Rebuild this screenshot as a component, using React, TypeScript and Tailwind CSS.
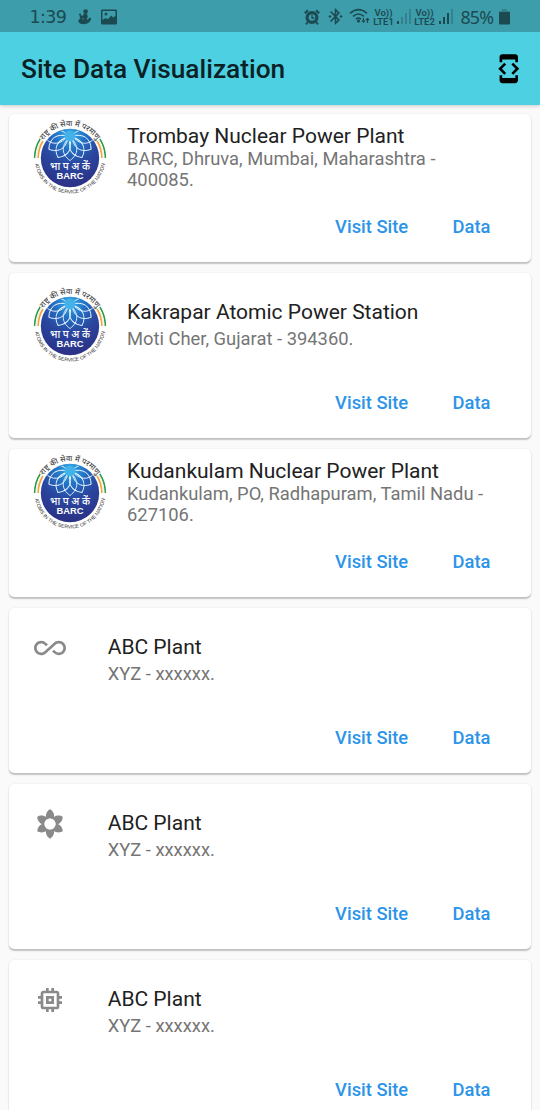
import React from "react";
import {
  MdAllInclusive,
  MdBluetoothConnected,
  MdDeveloperMode,
  MdMemory,
} from "react-icons/md";

function BarcLogo() {
  return (
    <svg viewBox="-39 -39 78 78" className="block h-[78px] w-[78px] shrink-0 overflow-visible">
      <defs>
        <radialGradient id="disc" cx="0.5" cy="0.1" r="0.85">
          <stop offset="0" stopColor="#36b0ea" />
          <stop offset="0.3" stopColor="#2371c4" />
          <stop offset="0.6" stopColor="#2a469f" />
          <stop offset="1" stopColor="#2b3488" />
        </radialGradient>
        <clipPath id="discClip">
          <circle r="28.8" />
        </clipPath>
        <path id="topArc" d="M-31.8 3A31.95 31.95 0 1 1 31.8 3" />
        <path id="bottomArc" d="M-34.2 -9A35.4 35.4 0 1 0 34.2 -9" />
      </defs>
      <circle r="29.2" fill="url(#disc)" />
      <g clipPath="url(#discClip)" fill="none" stroke="#eef8ff" strokeWidth="0.9">
        {[-84, -56, -28, 0, 28, 56, 84].map((a) => (
          <path key={a} d="M0 2C-9 10 -9 19 0 25.5C9 19 9 10 0 2" transform={`translate(0 -23) rotate(${a})`} />
        ))}
      </g>
      <circle cy="-22" r="5.4" fill="#41b3ea" />
      <g fill="none" strokeWidth="1.6">
        <path d="M-35.3 0A35.3 35.3 0 0 1 -29.8 -19" stroke="#279b48" />
        <path d="M-33.6 0A33.6 33.6 0 0 1 -28.4 -18" stroke="#f4f4ea" />
        <path d="M-31.8 0A31.8 31.8 0 0 1 -27 -17" stroke="#f2a43c" />
        <path d="M35.3 0A35.3 35.3 0 0 0 29.8 -19" stroke="#279b48" />
        <path d="M33.6 0A33.6 33.6 0 0 0 28.4 -18" stroke="#f4f4ea" />
        <path d="M31.8 0A31.8 31.8 0 0 0 27 -17" stroke="#f2a43c" />
      </g>
      <g textAnchor="middle" fontFamily="Noto Sans, sans-serif">
        <text fontSize="7.7" fontWeight="500" fill="#454545">
          <textPath href="#topArc" startOffset="50%">राष्ट्र की सेवा में परमाणु</textPath>
        </text>
        <text fontSize="5.1" fill="#2c2c2c" fontFamily="Liberation Sans, sans-serif">
          <textPath href="#bottomArc" startOffset="50%">ATOMS IN THE SERVICE OF THE NATION</textPath>
        </text>
        <text y="11.6" fontSize="10.6" fontWeight="500" fill="#fff" textLength="40" lengthAdjust="spacingAndGlyphs">भा प अ कें</text>
        <text y="21" fontSize="9" fontWeight="700" fill="#fff" fontFamily="Liberation Sans, sans-serif" textLength="27" lengthAdjust="spacingAndGlyphs">BARC</text>
      </g>
    </svg>
  );
}

function FlowerIcon() {
  return (
    <svg viewBox="-12 -12 24 24" className="block h-[32px] w-[32px]" fill="currentColor">
      {[0, 60, 120, 180, 240, 300].map((a) => (
        <path key={a} d="M-3 -4.3C-3.6 -7.5 -1.9 -10 0 -11C1.9 -10 3.6 -7.5 3 -4.3Z" transform={`rotate(${a})`} />
      ))}
      <circle r="4.9" fill="none" stroke="currentColor" strokeWidth="1.4" />
      <circle r="4.1" fill="#fff" />
    </svg>
  );
}

function Actions() {
  return (
    <div className="absolute bottom-[23px] right-[40.6px] flex gap-[44.3px] text-[18.375px] leading-[24px] font-medium text-[#2b93e8]">
      <button>Visit Site</button>
      <button>Data</button>
    </div>
  );
}

const cardClass =
  "relative w-[522px] shrink-0 rounded-[5px] bg-white shadow-[0_1.3px_1.5px_rgba(0,0,0,0.22),0_0_2px_rgba(0,0,0,0.08)]";

function SiteCard({ name, lines }: { name: string; lines: string[] }) {
  const tall = lines.length === 1;
  return (
    <article className={`${cardClass} ${tall ? "h-[165.3px]" : "h-[148.8px]"}`}>
      <div className={`flex pl-[22px] ${tall ? "pt-[14px]" : "pt-[5px]"}`}>
        <BarcLogo />
        <div className={`ml-[18px] ${tall ? "pt-[13.3px]" : "pt-[5.5px]"}`}>
          <h2 className="text-[21px] leading-[25px] text-[#212121]">{name}</h2>
          <p className={`text-[18.375px] leading-[21.3px] text-[#757575] ${tall ? "mt-[2.7px]" : "-mt-[1px]"}`}>
            {lines.map((line) => (
              <span key={line} className="block whitespace-nowrap">{line}</span>
            ))}
          </p>
        </div>
      </div>
      <Actions />
    </article>
  );
}

function PlantCard({ icon }: { icon: React.ReactNode }) {
  return (
    <article className={`${cardClass} h-[165.4px]`}>
      <div className="flex pl-[25px] pt-[24.4px] text-[#8a8a8a]">
        <div className="h-[32px] w-[32px] text-[32px]">{icon}</div>
        <div className="ml-[41.7px] pt-[2.5px]">
          <h2 className="text-[21px] leading-[25px] text-[#212121]">ABC Plant</h2>
          <p className="mt-[3px] text-[18.375px] leading-[21.3px] text-[#757575]">XYZ - xxxxxx.</p>
        </div>
      </div>
      <Actions />
    </article>
  );
}

function Signal({ strong }: { strong?: boolean }) {
  return (
    <svg viewBox="0 0 14 16" className="h-4 w-[14px] shrink-0" fill="#1c4a51">
      <rect x="0" y="12" width="2" height="3" />
      <rect x="4" y="8" width="2" height="7" opacity={strong ? 1 : 0.3} />
      <rect x="8" y="4" width="2" height="11" opacity={strong ? 1 : 0.3} />
      <rect x="12" y="0" width="2" height="15" opacity="0.3" />
    </svg>
  );
}

function Volte({ label }: { label: string }) {
  return (
    <div className="w-[21px] shrink-0 text-center text-[9.5px] leading-[9px] font-semibold">
      <div>Vo))</div>
      <div>{label}</div>
    </div>
  );
}

function StatusBar() {
  return (
    <div className="flex h-[31.5px] items-center bg-[#3d9dab] pt-[2px] text-[#1c4a51]">
      <span className="ml-[29.5px] w-[38px] font-['DejaVu_Sans'] text-[17.5px] leading-5 -tracking-[0.6px] whitespace-nowrap">1:39</span>
      <svg viewBox="0 0 14 16" className="ml-[10px] h-4 w-[14px]" fill="currentColor">
        <circle cx="7.6" cy="2.6" r="2.3" />
        <circle cx="2" cy="5.6" r="1.1" />
        <path d="M5.8 4.4h3l1 3-1.2 3.1c1.4.2 2.4-.8 3-2.1l1.6.9c-.5 3.3-2.7 5.5-6.5 5.8C2.7 15.4.4 14 .4 12c0-1.3 1-2 2.1-2.2C1.2 8.6 1.5 6.5 3 6l1.7 1.1z" />
        <circle cx="5" cy="9.7" r=".7" fill="#3d9dab" />
      </svg>
      <svg viewBox="0 0 16 16" className="ml-[9.5px] h-4 w-4">
        <path fill="currentColor" fillRule="evenodd" d="M1 0.5h14q1 0 1 1v13q0 1-1 1H1q-1 0-1-1v-13q0-1 1-1zM1.5 2v9l3-2 2.3 1.3 3.4-3.8 2.2 2 2.1-1.8V2zM5 3.5a1.5 1.5 0 1 1 0 3 1.5 1.5 0 0 1 0-3z" />
      </svg>
      <svg viewBox="0 0 16 16" className="ml-[186.5px] h-4 w-4 shrink-0" fill="none" stroke="currentColor">
        <circle cx="8" cy="8.5" r="4.9" strokeWidth="3.2" />
        <path d="M8 5.8V9h2.4" strokeWidth="1.3" />
        <path d="M.8 4.2 4 1.2M15.2 4.2 12 1.2" strokeWidth="2.2" />
        <path d="M3.8 13 2 15.3M12.2 13l1.8 2.3" strokeWidth="2" />
      </svg>
      <MdBluetoothConnected className="ml-[6px] h-[19px] w-[19px] shrink-0" />
      <svg viewBox="0 0 21 17" className="ml-[4.5px] h-[17px] w-[21px] shrink-0" fill="none" stroke="currentColor" strokeWidth="1.6">
        <path d="M1 5.4Q9.5-2 18 5.4M4 8.4Q9.5 3.6 15 8.4M6.8 11.2Q9.5 8.9 12 11.2" />
        <circle cx="9.5" cy="13" r=".8" fill="currentColor" />
        <path d="M14.5 10v4M13 12.7l1.5 1.5 1.5-1.5M18.5 15v-4.5M17 12l1.5-1.5L20 12" strokeWidth="1.2" />
      </svg>
      <div className="ml-[3px]"><Volte label="LTE1" /></div>
      <div className="ml-[3px]"><Signal /></div>
      <div className="ml-[3px]"><Volte label="LTE2" /></div>
      <div className="ml-[3.5px]"><Signal strong /></div>
      <span className="ml-[8px] w-[35px] font-['Noto_Sans'] text-[17.8px] leading-5 -tracking-[0.8px] whitespace-nowrap">85%</span>
      <svg viewBox="0 0 11 16" className="ml-[3.5px] h-4 w-[11px] shrink-0" fill="currentColor">
        <path d="M3 0h5v2h3v2H0V2h3z" opacity=".35" />
        <rect y="3" width="11" height="12.5" rx=".8" />
      </svg>
    </div>
  );
}

export default function App() {
  return (
    <div className="flex h-[1110px] w-[540px] flex-col overflow-hidden bg-[#fafafa] font-[Roboto,sans-serif]">
      <header className="relative z-10 shrink-0 bg-[#4dd0e1] shadow-[0_1px_4px_rgba(0,0,0,0.2)]">
        <StatusBar />
        <div className="flex h-[73.5px] items-center justify-between pl-[21px] pr-[16px] pt-px">
          <h1 className="text-[26.25px] leading-8 font-medium text-[#0a2226]">Site Data Visualization</h1>
          <MdDeveloperMode className="h-[31.5px] w-[31.5px] text-black" />
        </div>
      </header>
      <main className="flex min-h-0 flex-1 flex-col gap-[10.5px] overflow-hidden pl-[9px] pt-[8.5px]">
        <SiteCard name="Trombay Nuclear Power Plant" lines={["BARC, Dhruva, Mumbai, Maharashtra -", "400085."]} />
        <SiteCard name="Kakrapar Atomic Power Station" lines={["Moti Cher, Gujarat - 394360."]} />
        <SiteCard name="Kudankulam Nuclear Power Plant" lines={["Kudankulam, PO, Radhapuram, Tamil Nadu -", "627106."]} />
        <PlantCard icon={<MdAllInclusive />} />
        <PlantCard icon={<FlowerIcon />} />
        <PlantCard icon={<MdMemory />} />
      </main>
    </div>
  );
}
